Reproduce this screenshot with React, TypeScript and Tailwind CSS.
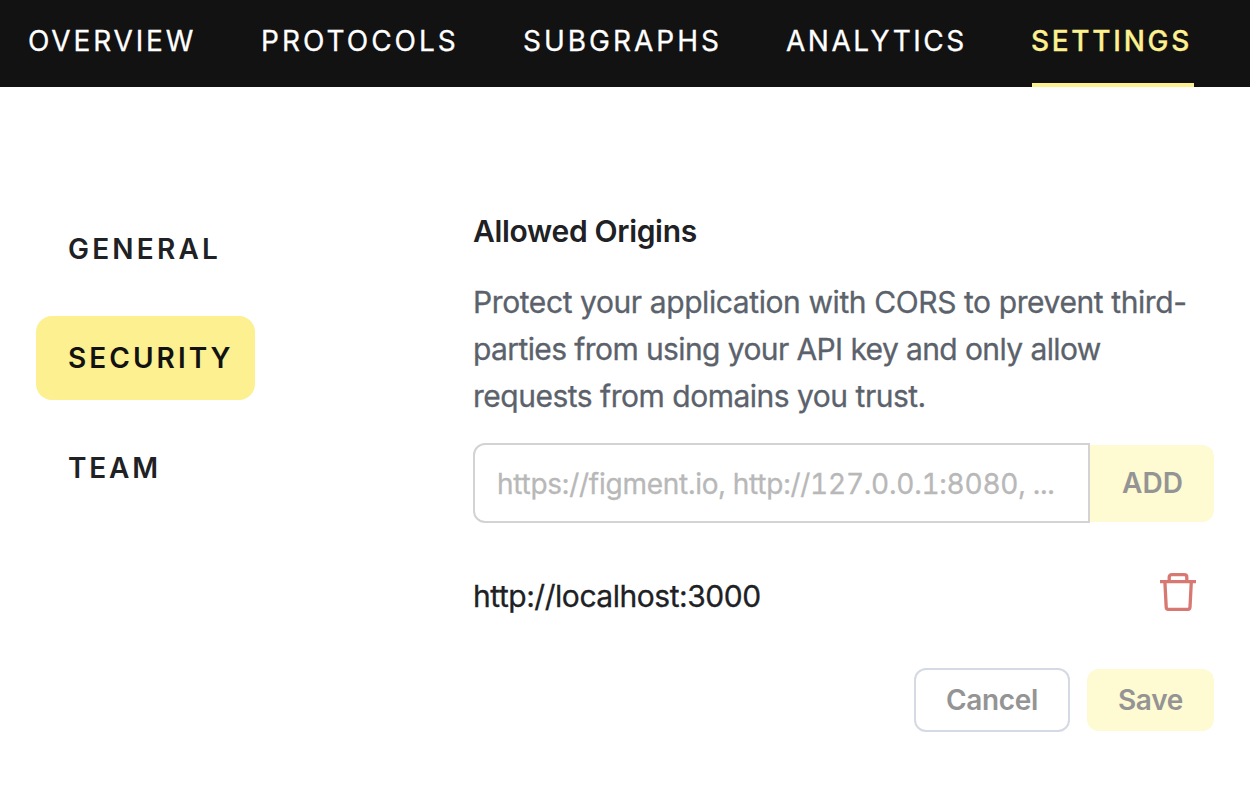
import React from "react";

const tabs = [
  { label: "OVERVIEW", style: "mr-[63px] w-[170px] tracking-[2.85px]" },
  { label: "PROTOCOLS", style: "mr-[62px] w-[200px] tracking-[3px]" },
  { label: "SUBGRAPHS", style: "mr-[62px] w-[200px] tracking-[3px]" },
  { label: "ANALYTICS", style: "mr-[64px] w-[183px] pl-px tracking-[2.5px]" },
];

function TrashIcon() {
  return (
    <svg width="36" height="38" viewBox="0 0 36 38" fill="none" stroke="#d87872" strokeWidth="3.3" strokeLinecap="butt" strokeLinejoin="round">
      <path d="M0 8.7H36" />
      <path d="M9.2 8.5V4.2Q9.2 1.7 11.8 1.7H24.2Q26.8 1.7 26.8 4.2V8.5" />
      <path d="M4.9 8.9L6.2 34.2Q6.3 36.3 8.3 36.3H27.9Q29.9 36.3 30 34.2L31.3 8.9" />
    </svg>
  );
}

export default function App() {
  return (
    <div className="h-[800px] w-[1250px] overflow-hidden bg-white font-['Inter',sans-serif] text-[#202124]">
      <header className="flex h-[87px] bg-[#121212] pl-7 text-[28px] leading-[83px] text-white [-webkit-text-stroke:0.3px]">
        {tabs.map((t) => (
          <a key={t.label} className={`${t.style} shrink-0 whitespace-nowrap`}>{t.label}</a>
        ))}
        <a className="h-[87px] w-[162px] shrink-0 whitespace-nowrap border-b-4 border-[#fcf090] font-medium tracking-[2.7px] text-[#fcf090]"><span className="-ml-px">SETTINGS</span></a>
      </header>
      <main className="flex">
        <nav className="flex w-[473px] shrink-0 flex-col items-start gap-[26px] pl-9 pt-[119px] text-[28px] font-semibold leading-[84px]">
          <a className="h-[84px] whitespace-nowrap px-8 pt-px tracking-[3.2px]">GENERAL</a>
          <a className="h-[84px] w-[219px] whitespace-nowrap rounded-2xl bg-[#fcf090] pl-8 tracking-[3.05px] text-[#121212]">SECURITY</a>
          <a className="h-[84px] whitespace-nowrap px-8 tracking-[2.8px]">TEAM</a>
        </nav>
        <section className="flex w-[742px] shrink-0 flex-col pt-[123px]">
          <h1 className="text-[30px] font-semibold leading-[42px] tracking-[-0.32px]">Allowed Origins</h1>
          <p className="mt-[27px] whitespace-nowrap text-[30px] leading-[47px] text-[#5b626b] [-webkit-text-stroke:0.3px]">
            <span className="block tracking-[-0.41px]">Protect your application with CORS to prevent third-</span>
            <span className="block tracking-[-0.6px]">parties from using your API key and only allow</span>
            <span className="block tracking-[-0.49px]">requests from domains you trust.</span>
          </p>
          <form className="mt-[23px] flex items-center">
            <input
              className="h-20 w-[617px] rounded-l-xl border-2 border-[#d3d3d3] px-[22px] pt-0.5 text-[28px] tabular-nums tracking-[-0.25px] text-[#202124] outline-none [-webkit-text-stroke:0.3px] placeholder:text-[#b8b8b8]"
              placeholder="https://figment.io, http://127.0.0.1:8080, ..."
            />
            <button type="button" className="h-[77px] w-[124px] rounded-r-xl bg-[#fefad2] pl-px text-[28px] font-semibold text-[#949494]">ADD</button>
          </form>
          <div className="mt-[50px] flex h-[46px] items-start justify-between pr-[19px]">
            <span className="text-[30px] leading-[46px] tracking-[-0.46px] [-webkit-text-stroke:0.3px]">http://localhost:3000</span>
            <TrashIcon />
          </div>
          <div className="mt-[49px] flex items-center gap-[17px] pl-[441px]">
            <button type="button" className="h-16 w-[156px] rounded-xl border-2 border-[#d5d9e3] text-[28px] font-semibold tracking-[-0.35px] text-[#949494]">Cancel</button>
            <button type="button" className="h-[62px] w-[127px] rounded-xl bg-[#fefad2] text-[28px] font-semibold tracking-[-0.3px] text-[#949494]">Save</button>
          </div>
        </section>
      </main>
    </div>
  );
}
